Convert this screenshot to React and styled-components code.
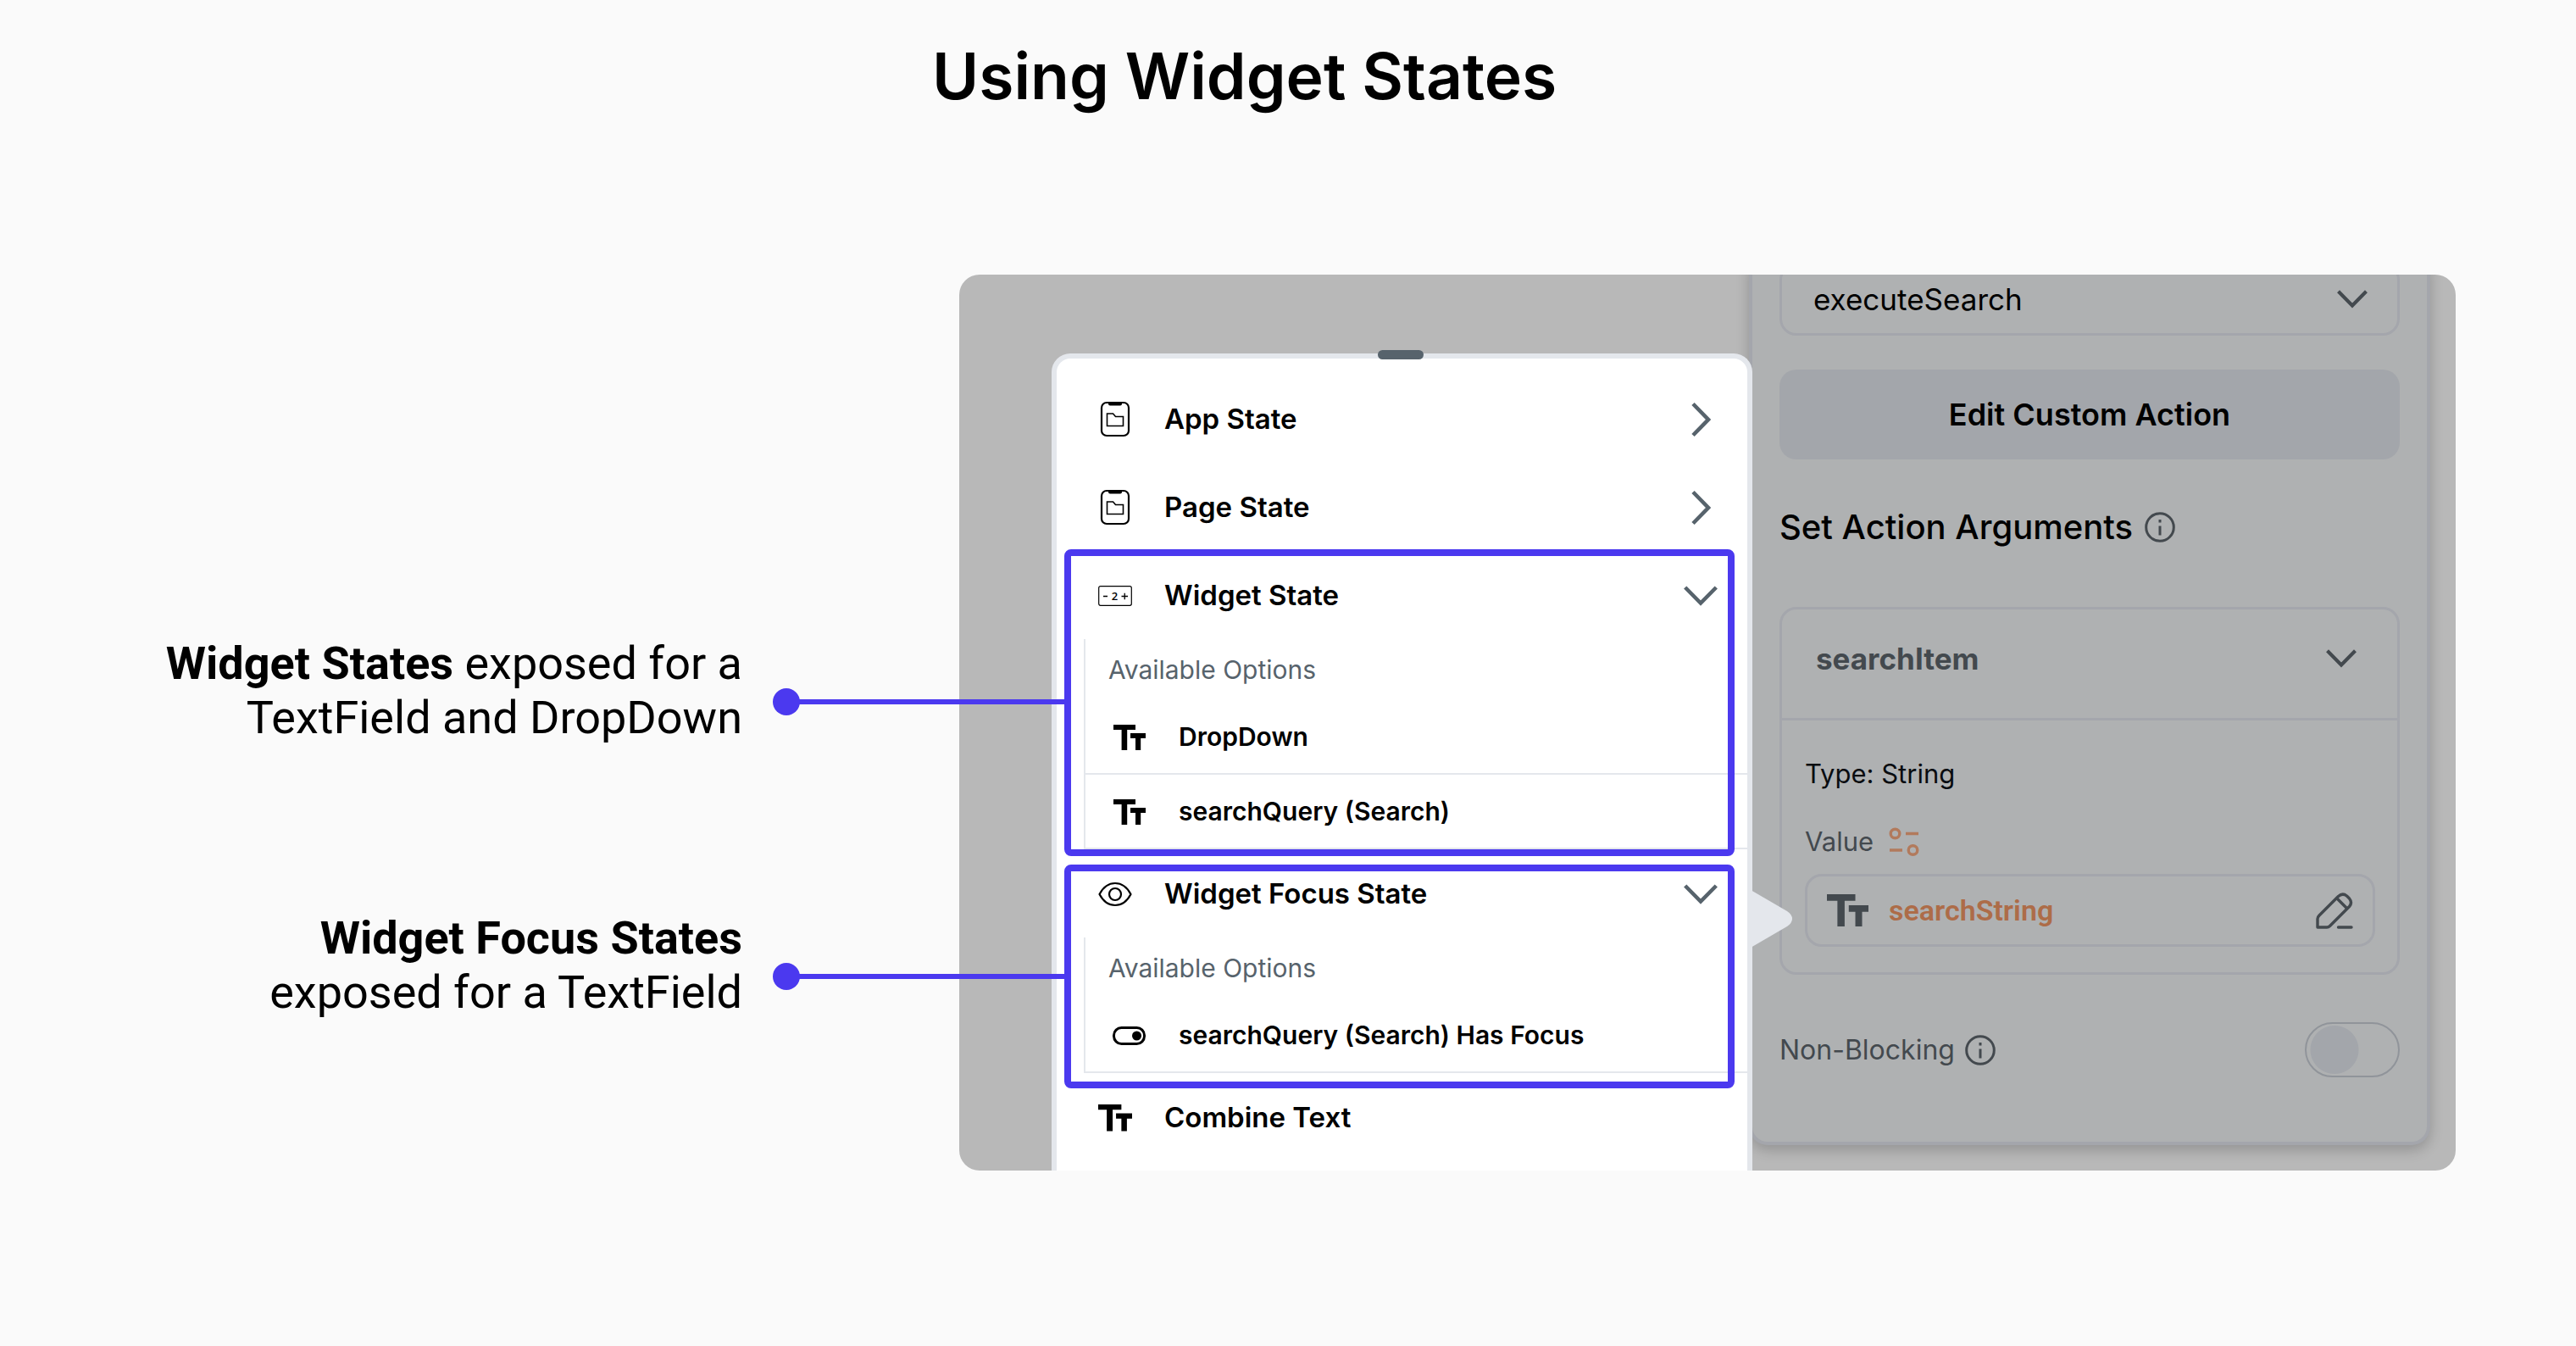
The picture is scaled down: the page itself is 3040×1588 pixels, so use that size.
import React from 'react';
import styled, { createGlobalStyle } from 'styled-components';

const blue = '#4b39ef';
const line = '#e4e7ec';
const slate = '#57636c';
const dimLine = '#a4a6ac';
const dimSlate = '#43494e';

const GlobalStyle = createGlobalStyle`
  *, *::before, *::after { box-sizing: border-box; }
  body { margin: 0; background: #fafafa; color: #000; font-family: Inter, "Liberation Sans", sans-serif; }
  button, select, input { font: inherit; color: inherit; margin: 0; }
  svg { display: block; flex: none; }
`;

const Page = styled.main`
  padding: 40px 142px 208px 0;
`;

const Title = styled.h1`
  margin: 0 0 184px 1100px;
  font-size: 75px;
  line-height: 100px;
  font-weight: 600;
  white-space: nowrap;
`;

const Figure = styled.section`
  display: grid;
  grid-template-columns: minmax(0, 1132fr) minmax(0, 1766fr);
`;

const Notes = styled.div`
  position: relative;
  z-index: 3;
  display: flex;
  flex-direction: column;
  gap: 196px;
  padding: 427px 188px 0 0;
`;

const Note = styled.div`
  display: flex;
  justify-content: flex-end;
  gap: 36px;
`;

const NoteText = styled.p`
  margin: 0;
  font-family: Roboto, sans-serif;
  font-size: 54px;
  line-height: 64px;
  text-align: right;
  white-space: nowrap;
`;

const Dot = styled.span`
  position: relative;
  flex: none;
  width: 32px;
  height: 32px;
  margin-top: 61px;
  border-radius: 50%;
  background: ${blue};
  &::after {
    content: '';
    position: absolute;
    top: 13px;
    left: 16px;
    width: 330px;
    height: 6px;
    background: ${blue};
  }
`;

const Stage = styled.div`
  display: flex;
  align-items: flex-start;
  padding-left: 109px;
  padding-right: 30px;
  border-radius: 24px;
  background: #b8b8b8;
  overflow: hidden;
`;

const Menu = styled.div`
  position: relative;
  z-index: 2;
  flex: none;
  width: 827px;
  margin-top: 93px;
  padding: 19px 0 11px;
  border: 6px solid ${line};
  border-bottom: 0;
  border-radius: 22px 22px 0 0;
  background: #fff;
`;

const Handle = styled.span`
  position: absolute;
  top: -10px;
  left: 50%;
  width: 54px;
  height: 11px;
  margin-left: -29px;
  border-radius: 6px;
  background: ${slate};
`;

const Pointer = styled.svg`
  position: absolute;
  left: 100%;
  top: 627px;
  margin-left: 4px;
`;

const Group = styled.div`
  position: relative;
`;

const Highlight = styled.span`
  position: absolute;
  left: 9px;
  right: 15px;
  top: ${(p) => p.$top}px;
  bottom: ${(p) => p.$bottom}px;
  border: 8px solid ${blue};
  border-radius: 8px;
  pointer-events: none;
`;

const MenuRow = styled.button`
  display: flex;
  align-items: center;
  gap: 38px;
  width: 100%;
  height: 104px;
  padding: 0 35px 0 49px;
  border: 0;
  background: none;
  font-size: 33px;
  line-height: 40px;
  font-weight: 600;
  text-align: left;
`;

const Slot = styled.span`
  display: flex;
  justify-content: center;
  flex: none;
  width: 40px;
  padding-top: 2px;
`;

const RowLabel = styled.span`
  flex: 1;
`;

const Options = styled.div`
  margin-left: 32px;
  border-left: 2px solid ${line};
`;

const OptionsTitle = styled.p`
  display: flex;
  align-items: center;
  height: 72px;
  margin: 0;
  padding: 0 27px;
  color: ${slate};
  font-size: 30px;
  line-height: 36px;
`;

const Option = styled.button`
  display: flex;
  align-items: center;
  gap: 38px;
  width: 100%;
  height: 88px;
  padding: 0 32px;
  border: 0;
  border-bottom: 2px solid ${line};
  background: none;
  font-size: 30px;
  line-height: 38px;
  font-weight: 600;
  text-align: left;
`;

const Panel = styled.div`
  flex: 1;
  min-width: 0;
  margin: -14px 0 24px -4px;
  padding: 0 32px 76px;
  border: 4px solid ${dimLine};
  border-top: 0;
  border-radius: 0 0 22px 22px;
  background: #afb1b2;
  box-shadow: 0 6px 16px rgba(0, 0, 0, 0.2);
`;

const SelectWrap = styled.div`
  display: grid;
  align-items: center;
  & > * { grid-area: 1 / 1; }
  & > svg { justify-self: end; margin-right: 38px; pointer-events: none; }
`;

const Select = styled.select`
  appearance: none;
  width: 100%;
  height: 86px;
  padding: 0 37px;
  border: 3px solid ${dimLine};
  border-radius: 20px;
  background: transparent;
  font-size: 35px;
`;

const ActionButton = styled.button`
  width: 100%;
  height: 106px;
  margin-top: 40px;
  border: 0;
  border-radius: 20px;
  background: #a3a6ab;
  font-size: 36px;
  font-weight: 600;
`;

const SectionTitle = styled.h2`
  display: flex;
  align-items: center;
  gap: 14px;
  margin: 56px 0 70px;
  font-size: 40px;
  line-height: 48px;
  font-weight: 500;
`;

const Card = styled.div`
  border: 3px solid ${dimLine};
  border-radius: 20px;
`;

const CardHead = styled.button`
  display: flex;
  align-items: center;
  justify-content: space-between;
  width: 100%;
  height: 131px;
  padding: 4px 48px 16px 40px;
  border: 0;
  border-bottom: 3px solid ${dimLine};
  background: none;
  color: ${dimSlate};
  font-size: 35px;
  font-weight: 700;
`;

const CardBody = styled.div`
  padding: 43px 26px 30px 27px;
`;

const TypeLine = styled.p`
  margin: 0 0 40px;
  color: #090c10;
  font-size: 31px;
  line-height: 40px;
`;

const ValueLabel = styled.label`
  display: flex;
  align-items: center;
  gap: 18px;
  color: ${dimSlate};
  font-size: 31px;
  line-height: 40px;
`;

const ValueBox = styled.div`
  display: flex;
  align-items: center;
  gap: 24px;
  height: 86px;
  margin-top: 18px;
  padding: 0 23px;
  border: 3px solid ${dimLine};
  border-radius: 20px;
  color: ${dimSlate};
`;

const ValueInput = styled.input`
  flex: 1;
  min-width: 0;
  padding: 0;
  border: 0;
  background: none;
  color: #ad6c48;
  font-family: Roboto, sans-serif;
  font-size: 34px;
  font-weight: 600;
`;

const IconButton = styled.button`
  padding: 0;
  border: 0;
  background: none;
`;

const SwitchRow = styled.label`
  display: flex;
  align-items: center;
  gap: 12px;
  margin-top: 56px;
  color: ${dimSlate};
  font-size: 32px;
`;

const Switch = styled.input`
  appearance: none;
  width: 112px;
  height: 65px;
  margin-left: auto;
  border: 2px solid #90949a;
  border-radius: 33px;
  background: radial-gradient(circle at 33px 50%, #a3a6ab 28px, transparent 29px);
`;

const TextIcon = ({ width = 38 }) => (
  <svg width={width} viewBox="0 0 38 30" fill="currentColor">
    <path d="M0 0H26V6H16.2V30H9.6V6H0Z" />
    <path d="M20 10H38V16H32.2V30H26V16H20Z" />
  </svg>
);

const StateIcon = () => (
  <svg width="36" height="44" viewBox="0 0 36 44" fill="none" stroke="#000">
    <rect x="2" y="2" width="32" height="39" rx="6" strokeWidth="2.2" />
    <path d="M10 2H26V3.5Q26 5.500 24 5.500H12Q10 5.500 10 3.500Z" fill="#000" stroke="none" />
    <path d="M8.500 15H15.500L18.500 18.500H27.500V29.500H8.500Z" strokeWidth="1.600" />
  </svg>
);

const CounterIcon = () => (
  <svg width="40" height="24" viewBox="0 0 40 24" fill="none" stroke="#000">
    <rect x="0.700" y="0.700" width="38.600" height="22.600" rx="2" strokeWidth="1.200" />
    <path d="M6 12.500H11M27.500 12.500H35M31.250 8.800V16.200" strokeWidth="1.300" />
    <text x="19.500" y="17" textAnchor="middle" fontFamily="Open Sans, sans-serif" fontSize="13" fill="#000" stroke="none">2</text>
  </svg>
);

const EyeIcon = () => (
  <svg width="40" height="30" viewBox="0 0 40 30" fill="none" stroke="#000" strokeWidth="2.200">
    <path d="M1.500 15C6 6.500 12.500 2 20 2S34 6.500 38.500 15C34 23.500 27.500 28 20 28S6 23.500 1.500 15Z" strokeLinejoin="round" />
    <circle cx="20" cy="15" r="7" />
  </svg>
);

const ToggleIcon = () => (
  <svg width="40" height="22" viewBox="0 0 40 22">
    <rect x="1.500" y="1.500" width="36" height="19" rx="9" fill="none" stroke="#000" strokeWidth="3" />
    <circle cx="28.500" cy="11" r="5.500" />
  </svg>
);

const ChevronRight = () => (
  <svg width="24" height="42" viewBox="0 0 24 42" fill="none" stroke={slate} strokeWidth="4.600">
    <path d="M3 2.500L21 21L3 39.500" />
  </svg>
);

const ChevronDown = ({ width = 40, color = slate }) => (
  <svg width={width} viewBox="0 0 40 24" fill="none" stroke={color} strokeWidth="4.600">
    <path d="M1.700 2L20 20.500L38.300 2" />
  </svg>
);

const InfoIcon = () => (
  <svg width="36" height="36" viewBox="0 0 36 36" fill="none" stroke={dimSlate} strokeWidth="3">
    <circle cx="18" cy="18" r="16.300" />
    <path d="M18 16.500V27.500M18 9V12.500" />
  </svg>
);

const VariableIcon = () => (
  <svg width="36" height="34" viewBox="0 0 36 34" fill="none" stroke="#b27a5c" strokeWidth="3.400">
    <circle cx="7.500" cy="7.500" r="5.300" />
    <circle cx="28.500" cy="27" r="5.300" />
    <path d="M20 7.500H35M1 27H16" />
  </svg>
);

const PencilIcon = () => (
  <svg width="44" height="43" viewBox="0 0 44 43" fill="none" stroke={dimSlate} strokeWidth="3.400" strokeLinejoin="round" strokeLinecap="round">
    <path d="M2 41V31Q2 29 4 27L26.500 4.500Q31.500 0 36.500 4L39.500 7Q43.500 12 39.500 16.500L16.500 39.500Q15 41 13 41Z" />
    <path d="M25 7L36 18M26.500 41H42" />
  </svg>
);

export default function App() {
  return (
    <>
      <GlobalStyle />
      <Page>
        <Title>Using Widget States</Title>
        <Figure>
          <Notes>
            <Note>
              <NoteText><b>Widget States</b> exposed for a<br />TextField and DropDown</NoteText>
              <Dot />
            </Note>
            <Note>
              <NoteText><b>Widget Focus States</b><br />exposed for a TextField</NoteText>
              <Dot />
            </Note>
          </Notes>
          <Stage>
            <Menu>
              <Handle />
              <MenuRow><Slot><StateIcon /></Slot><RowLabel>App State</RowLabel><Slot><ChevronRight /></Slot></MenuRow>
              <MenuRow><Slot><StateIcon /></Slot><RowLabel>Page State</RowLabel><Slot><ChevronRight /></Slot></MenuRow>
              <Group>
                <MenuRow><Slot><CounterIcon /></Slot><RowLabel>Widget State</RowLabel><Slot><ChevronDown /></Slot></MenuRow>
                <Options>
                  <OptionsTitle>Available Options</OptionsTitle>
                  <Option><Slot><TextIcon /></Slot>DropDown</Option>
                  <Option><Slot><TextIcon /></Slot>searchQuery (Search)</Option>
                </Options>
                <Highlight $top={-2} $bottom={-8} />
              </Group>
              <Group>
                <MenuRow><Slot><EyeIcon /></Slot><RowLabel>Widget Focus State</RowLabel><Slot><ChevronDown /></Slot></MenuRow>
                <Options>
                  <OptionsTitle>Available Options</OptionsTitle>
                  <Option><Slot><ToggleIcon /></Slot>searchQuery (Search) Has Focus</Option>
                </Options>
                <Highlight $top={18} $bottom={-18} />
              </Group>
              <MenuRow><Slot><TextIcon width={40} /></Slot><RowLabel>Combine Text</RowLabel></MenuRow>
              <Pointer width="50" height="68" viewBox="0 0 50 68">
                <path d="M0 0L43 25Q49 29 49 34T43 43L0 68Z" fill={line} />
              </Pointer>
            </Menu>
            <Panel>
              <SelectWrap>
                <Select aria-label="Custom action" defaultValue="executeSearch">
                  <option>executeSearch</option>
                </Select>
                <ChevronDown width={36} color={dimSlate} />
              </SelectWrap>
              <ActionButton>Edit Custom Action</ActionButton>
              <SectionTitle>Set Action Arguments <InfoIcon /></SectionTitle>
              <Card>
                <CardHead>searchItem <ChevronDown width={36} color={dimSlate} /></CardHead>
                <CardBody>
                  <TypeLine>Type: String</TypeLine>
                  <ValueLabel htmlFor="value">Value <VariableIcon /></ValueLabel>
                  <ValueBox>
                    <TextIcon width={49} />
                    <ValueInput id="value" defaultValue="searchString" />
                    <IconButton aria-label="Edit value"><PencilIcon /></IconButton>
                  </ValueBox>
                </CardBody>
              </Card>
              <SwitchRow>Non-Blocking <InfoIcon /><Switch type="checkbox" /></SwitchRow>
            </Panel>
          </Stage>
        </Figure>
      </Page>
    </>
  );
}
